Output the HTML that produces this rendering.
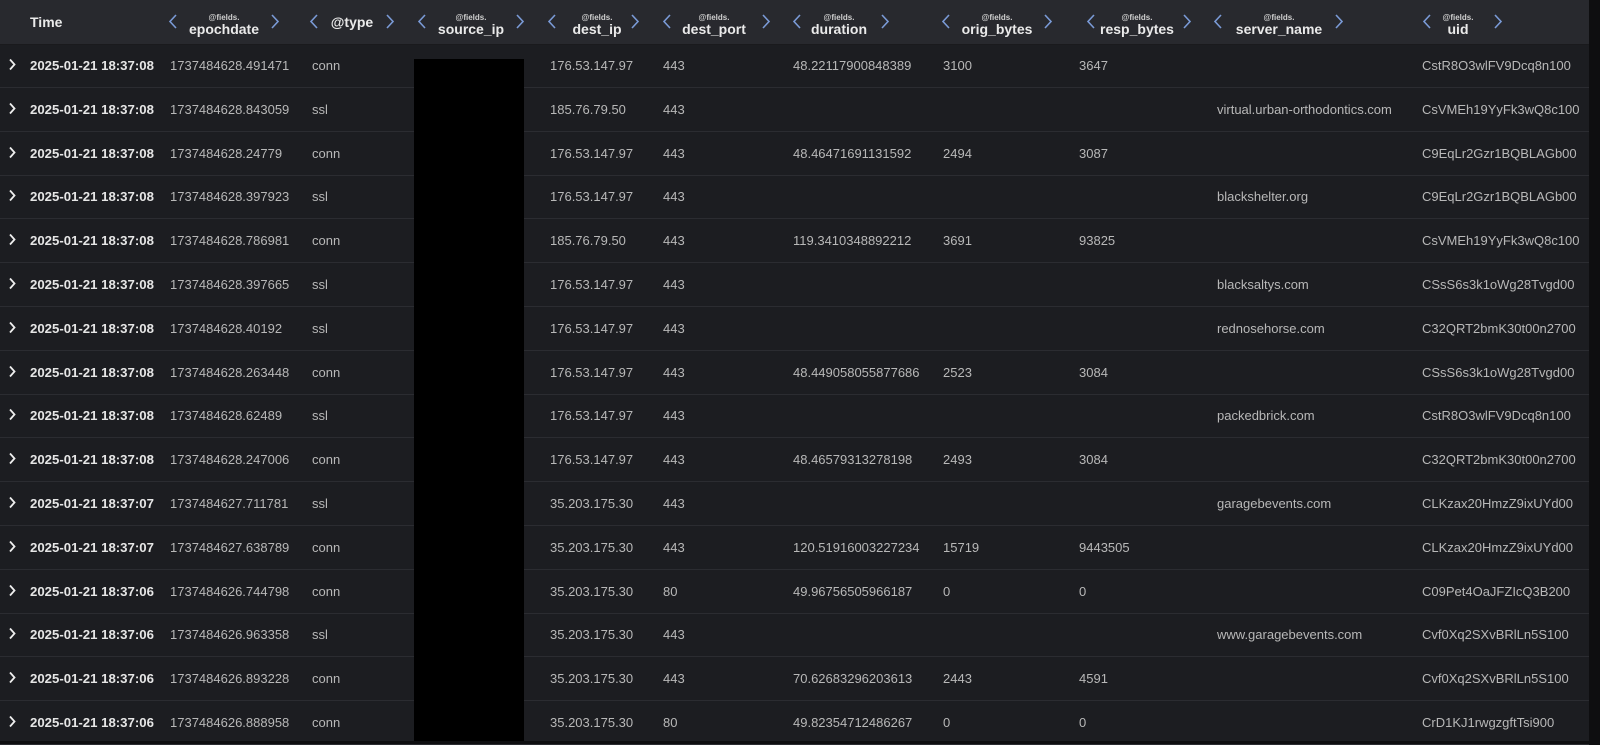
<!DOCTYPE html>
<html><head><meta charset="utf-8"><style>
body{margin:0;width:1600px;height:741px;background:#0e0e10;overflow:hidden;font-family:"Liberation Sans",Arial,sans-serif}
#t{position:absolute;left:0;top:0;width:1589px;height:741px;background:#1c1d21}
.h{position:absolute;left:0;top:0;width:1589px;height:44px;background:#28292e;border-bottom:1px solid #1a1a1d}
.h span{position:absolute;color:#eaeaea;font-weight:bold;font-size:14px}
.h .f{position:absolute;font-size:8px;color:#cfcfcf;font-weight:bold;transform:translateX(-50%);top:13px}
.h .l{position:absolute;transform:translateX(-50%);top:21px;font-size:14px;color:#eaeaea;font-weight:bold;white-space:nowrap}
.h svg{position:absolute;top:13px;width:10px;height:17px}
.r{position:absolute;left:0;width:1589px;height:43px;border-bottom:1px solid #2b2c31}
.r span{position:absolute;top:0;line-height:43px;font-size:13px;color:#b8b8b8;white-space:nowrap}
.r .ch{left:8px}
.r .ch svg{position:absolute;top:14px;left:0;width:8px;height:13px}
.r .tm{left:30px;color:#e6e6e6;font-weight:bold;font-size:13.2px}
.c2{left:170px}.c3{left:312px}.c4{left:550px}.c5{left:663px}.c6{left:793px}.c7{left:943px}.c8{left:1079px}.c9{left:1217px}.c10{left:1422px}
#bk{position:absolute;left:414px;top:59px;width:110px;height:682px;background:#000}
</style></head><body><div id="t">
<svg width="0" height="0" style="position:absolute"><defs>
<symbol id="L" viewBox="0 0 10 17"><path d="M8 2 L2 8.5 L8 15" fill="none" stroke="#7a9ad6" stroke-width="1.6"/></symbol>
<symbol id="R" viewBox="0 0 10 17"><path d="M2 2 L8 8.5 L2 15" fill="none" stroke="#7a9ad6" stroke-width="1.6"/></symbol>
<symbol id="C" viewBox="0 0 8 13"><path d="M2 1.5 L6.5 6.5 L2 11.5" fill="none" stroke="#eeeeee" stroke-width="1.8"/></symbol>
</defs></svg>
<div class="h">
<span style="left:30px;top:14px">Time</span>
<svg style="left:168px"><use href="#L"/></svg><b class="f" style="left:224px">@fields.</b><b class="l" style="left:224px">epochdate</b><svg style="left:270px"><use href="#R"/></svg>
<svg style="left:309px"><use href="#L"/></svg><b class="l" style="left:352px;top:14px">@type</b><svg style="left:385px"><use href="#R"/></svg>
<svg style="left:417px"><use href="#L"/></svg><b class="f" style="left:471px">@fields.</b><b class="l" style="left:471px">source_ip</b><svg style="left:515px"><use href="#R"/></svg>
<svg style="left:547px"><use href="#L"/></svg><b class="f" style="left:597px">@fields.</b><b class="l" style="left:597px">dest_ip</b><svg style="left:630px"><use href="#R"/></svg>
<svg style="left:662px"><use href="#L"/></svg><b class="f" style="left:714px">@fields.</b><b class="l" style="left:714px">dest_port</b><svg style="left:761px"><use href="#R"/></svg>
<svg style="left:792px"><use href="#L"/></svg><b class="f" style="left:839px">@fields.</b><b class="l" style="left:839px">duration</b><svg style="left:880px"><use href="#R"/></svg>
<svg style="left:941px"><use href="#L"/></svg><b class="f" style="left:997px">@fields.</b><b class="l" style="left:997px">orig_bytes</b><svg style="left:1043px"><use href="#R"/></svg>
<svg style="left:1086px"><use href="#L"/></svg><b class="f" style="left:1137px">@fields.</b><b class="l" style="left:1137px">resp_bytes</b><svg style="left:1182px"><use href="#R"/></svg>
<svg style="left:1213px"><use href="#L"/></svg><b class="f" style="left:1279px">@fields.</b><b class="l" style="left:1279px">server_name</b><svg style="left:1334px"><use href="#R"/></svg>
<svg style="left:1422px"><use href="#L"/></svg><b class="f" style="left:1458px">@fields.</b><b class="l" style="left:1458px">uid</b><svg style="left:1493px"><use href="#R"/></svg>
</div>
<div class="r" style="top:44px"><span class="ch"><svg><use href="#C"/></svg></span><span class="tm">2025-01-21 18:37:08</span><span class="c2">1737484628.491471</span><span class="c3">conn</span><span class="c4">176.53.147.97</span><span class="c5">443</span><span class="c6">48.22117900848389</span><span class="c7">3100</span><span class="c8">3647</span><span class="c10">CstR8O3wlFV9Dcq8n100</span></div>
<div class="r" style="top:87.8px"><span class="ch"><svg><use href="#C"/></svg></span><span class="tm">2025-01-21 18:37:08</span><span class="c2">1737484628.843059</span><span class="c3">ssl</span><span class="c4">185.76.79.50</span><span class="c5">443</span><span class="c9">virtual.urban-orthodontics.com</span><span class="c10">CsVMEh19YyFk3wQ8c100</span></div>
<div class="r" style="top:131.6px"><span class="ch"><svg><use href="#C"/></svg></span><span class="tm">2025-01-21 18:37:08</span><span class="c2">1737484628.24779</span><span class="c3">conn</span><span class="c4">176.53.147.97</span><span class="c5">443</span><span class="c6">48.46471691131592</span><span class="c7">2494</span><span class="c8">3087</span><span class="c10">C9EqLr2Gzr1BQBLAGb00</span></div>
<div class="r" style="top:175.4px"><span class="ch"><svg><use href="#C"/></svg></span><span class="tm">2025-01-21 18:37:08</span><span class="c2">1737484628.397923</span><span class="c3">ssl</span><span class="c4">176.53.147.97</span><span class="c5">443</span><span class="c9">blackshelter.org</span><span class="c10">C9EqLr2Gzr1BQBLAGb00</span></div>
<div class="r" style="top:219.2px"><span class="ch"><svg><use href="#C"/></svg></span><span class="tm">2025-01-21 18:37:08</span><span class="c2">1737484628.786981</span><span class="c3">conn</span><span class="c4">185.76.79.50</span><span class="c5">443</span><span class="c6">119.3410348892212</span><span class="c7">3691</span><span class="c8">93825</span><span class="c10">CsVMEh19YyFk3wQ8c100</span></div>
<div class="r" style="top:263px"><span class="ch"><svg><use href="#C"/></svg></span><span class="tm">2025-01-21 18:37:08</span><span class="c2">1737484628.397665</span><span class="c3">ssl</span><span class="c4">176.53.147.97</span><span class="c5">443</span><span class="c9">blacksaltys.com</span><span class="c10">CSsS6s3k1oWg28Tvgd00</span></div>
<div class="r" style="top:306.8px"><span class="ch"><svg><use href="#C"/></svg></span><span class="tm">2025-01-21 18:37:08</span><span class="c2">1737484628.40192</span><span class="c3">ssl</span><span class="c4">176.53.147.97</span><span class="c5">443</span><span class="c9">rednosehorse.com</span><span class="c10">C32QRT2bmK30t00n2700</span></div>
<div class="r" style="top:350.6px"><span class="ch"><svg><use href="#C"/></svg></span><span class="tm">2025-01-21 18:37:08</span><span class="c2">1737484628.263448</span><span class="c3">conn</span><span class="c4">176.53.147.97</span><span class="c5">443</span><span class="c6">48.449058055877686</span><span class="c7">2523</span><span class="c8">3084</span><span class="c10">CSsS6s3k1oWg28Tvgd00</span></div>
<div class="r" style="top:394.4px"><span class="ch"><svg><use href="#C"/></svg></span><span class="tm">2025-01-21 18:37:08</span><span class="c2">1737484628.62489</span><span class="c3">ssl</span><span class="c4">176.53.147.97</span><span class="c5">443</span><span class="c9">packedbrick.com</span><span class="c10">CstR8O3wlFV9Dcq8n100</span></div>
<div class="r" style="top:438.2px"><span class="ch"><svg><use href="#C"/></svg></span><span class="tm">2025-01-21 18:37:08</span><span class="c2">1737484628.247006</span><span class="c3">conn</span><span class="c4">176.53.147.97</span><span class="c5">443</span><span class="c6">48.46579313278198</span><span class="c7">2493</span><span class="c8">3084</span><span class="c10">C32QRT2bmK30t00n2700</span></div>
<div class="r" style="top:482px"><span class="ch"><svg><use href="#C"/></svg></span><span class="tm">2025-01-21 18:37:07</span><span class="c2">1737484627.711781</span><span class="c3">ssl</span><span class="c4">35.203.175.30</span><span class="c5">443</span><span class="c9">garagebevents.com</span><span class="c10">CLKzax20HmzZ9ixUYd00</span></div>
<div class="r" style="top:525.8px"><span class="ch"><svg><use href="#C"/></svg></span><span class="tm">2025-01-21 18:37:07</span><span class="c2">1737484627.638789</span><span class="c3">conn</span><span class="c4">35.203.175.30</span><span class="c5">443</span><span class="c6">120.51916003227234</span><span class="c7">15719</span><span class="c8">9443505</span><span class="c10">CLKzax20HmzZ9ixUYd00</span></div>
<div class="r" style="top:569.6px"><span class="ch"><svg><use href="#C"/></svg></span><span class="tm">2025-01-21 18:37:06</span><span class="c2">1737484626.744798</span><span class="c3">conn</span><span class="c4">35.203.175.30</span><span class="c5">80</span><span class="c6">49.96756505966187</span><span class="c7">0</span><span class="c8">0</span><span class="c10">C09Pet4OaJFZIcQ3B200</span></div>
<div class="r" style="top:613.4px"><span class="ch"><svg><use href="#C"/></svg></span><span class="tm">2025-01-21 18:37:06</span><span class="c2">1737484626.963358</span><span class="c3">ssl</span><span class="c4">35.203.175.30</span><span class="c5">443</span><span class="c9">www.garagebevents.com</span><span class="c10">Cvf0Xq2SXvBRlLn5S100</span></div>
<div class="r" style="top:657.2px"><span class="ch"><svg><use href="#C"/></svg></span><span class="tm">2025-01-21 18:37:06</span><span class="c2">1737484626.893228</span><span class="c3">conn</span><span class="c4">35.203.175.30</span><span class="c5">443</span><span class="c6">70.62683296203613</span><span class="c7">2443</span><span class="c8">4591</span><span class="c10">Cvf0Xq2SXvBRlLn5S100</span></div>
<div class="r" style="top:701px"><span class="ch"><svg><use href="#C"/></svg></span><span class="tm">2025-01-21 18:37:06</span><span class="c2">1737484626.888958</span><span class="c3">conn</span><span class="c4">35.203.175.30</span><span class="c5">80</span><span class="c6">49.82354712486267</span><span class="c7">0</span><span class="c8">0</span><span class="c10">CrD1KJ1rwgzgftTsi900</span></div>
<div id="bk"></div>
</div></body></html>
